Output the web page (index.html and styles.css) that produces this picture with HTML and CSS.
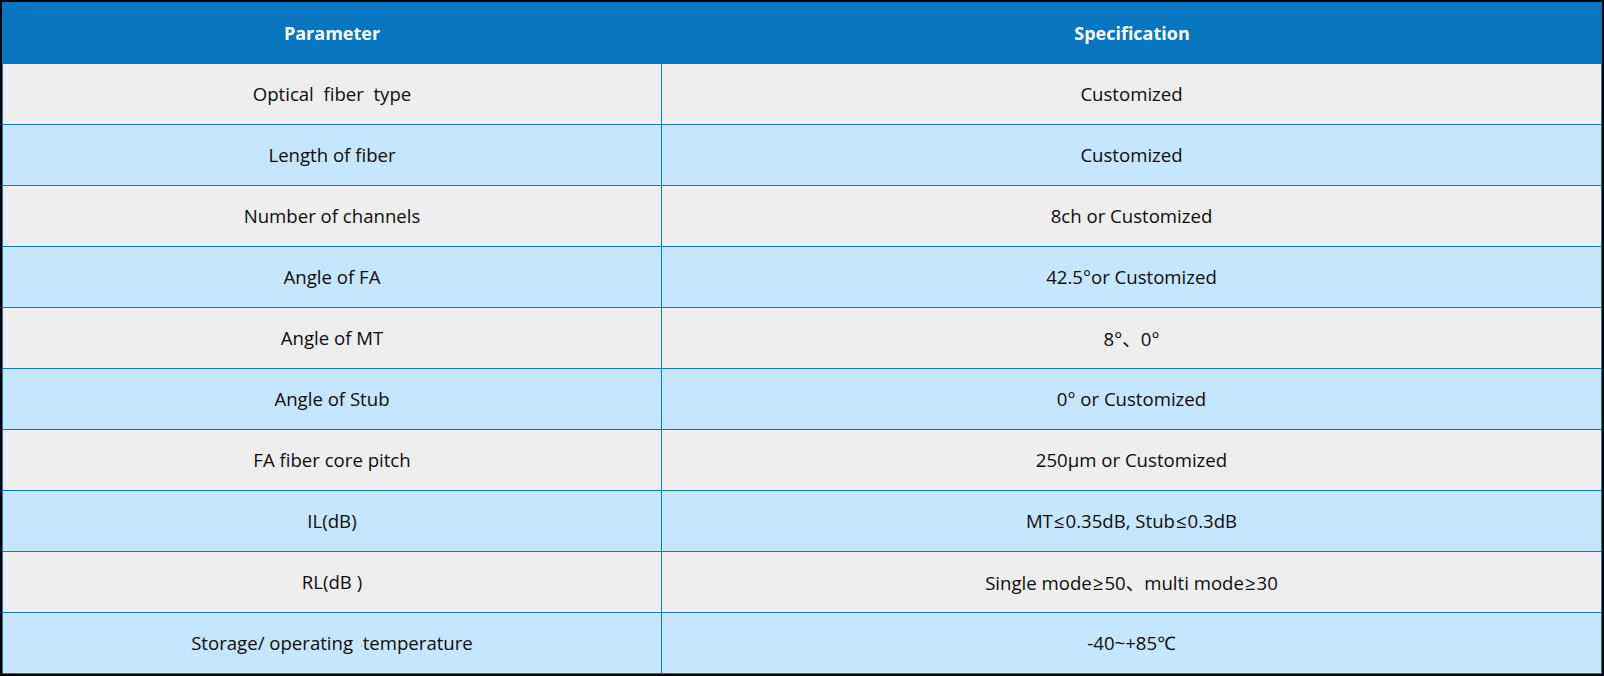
FILE: index.html
```html
<!DOCTYPE html>
<html lang="en">
<head>
<meta charset="utf-8">
<title>Specification</title>
<link rel="stylesheet" href="styles.css">
</head>
<body>
<div class="frame">
  <table class="spec">
    <thead>
      <tr><th class="c-param">Parameter</th><th class="c-spec">Specification</th></tr>
    </thead>
    <tbody>
      <tr class="odd"><td>Optical&nbsp; fiber&nbsp; type</td><td>Customized</td></tr>
      <tr class="even"><td>Length of fiber</td><td>Customized</td></tr>
      <tr class="odd"><td>Number of channels</td><td>8ch or Customized</td></tr>
      <tr class="even"><td>Angle of FA</td><td>42.5°or Customized</td></tr>
      <tr class="odd"><td>Angle of MT</td><td>8°、0°</td></tr>
      <tr class="even"><td>Angle of Stub</td><td>0° or Customized</td></tr>
      <tr class="odd"><td>FA fiber core pitch</td><td>250μm or Customized</td></tr>
      <tr class="even"><td>IL(dB)</td><td>MT<span class="sym">≤</span>0.35dB, Stub<span class="sym">≤</span>0.3dB</td></tr>
      <tr class="odd"><td>RL(dB )</td><td>Single mode<span class="sym">≥</span>50、multi mode<span class="sym">≥</span>30</td></tr>
      <tr class="even"><td>Storage/ operating&nbsp; temperature</td><td>-40~+85℃</td></tr>
    </tbody>
  </table>
</div>
</body>
</html>
```
FILE: styles.css
```css
html, body {
  margin: 0;
  padding: 0;
  background: #000;
}
.frame {
  width: 1604px;
  height: 676px;
  box-sizing: border-box;
  border: 2px solid #000;
  background: #000;
}
.spec {
  width: 1600px;
  border-collapse: separate;
  border-spacing: 0;
  table-layout: fixed;
  font-family: "Open Sans", "Noto Sans", "Noto Sans CJK SC", sans-serif;
  font-size: 18.6px;
  color: #0d0d0d;
}
.c-param { width: 660px; }
.spec th {
  height: 62px;
  padding: 0;
  background: #0875c1;
  color: #fff;
  font-size: 18px;
  font-weight: 700;
  text-align: center;
  vertical-align: middle;
  box-sizing: border-box;
}
.spec td {
  height: 61px;
  padding: 0 0 2px;
  box-sizing: border-box;
  text-align: center;
  vertical-align: middle;
  border-bottom: 1px solid #0b7acb;
  white-space: nowrap;
}
.spec td:first-child {
  border-left: 1px solid #0b7acb;
  border-right: 1px solid #0b7acb;
}
.spec td:last-child {
  border-right: 1px solid #0b7acb;
}
.sym {
  padding: 0 1px;
}
.odd td { background: #eeeeee; }
.even td { background: #c6e6fd; }
```
